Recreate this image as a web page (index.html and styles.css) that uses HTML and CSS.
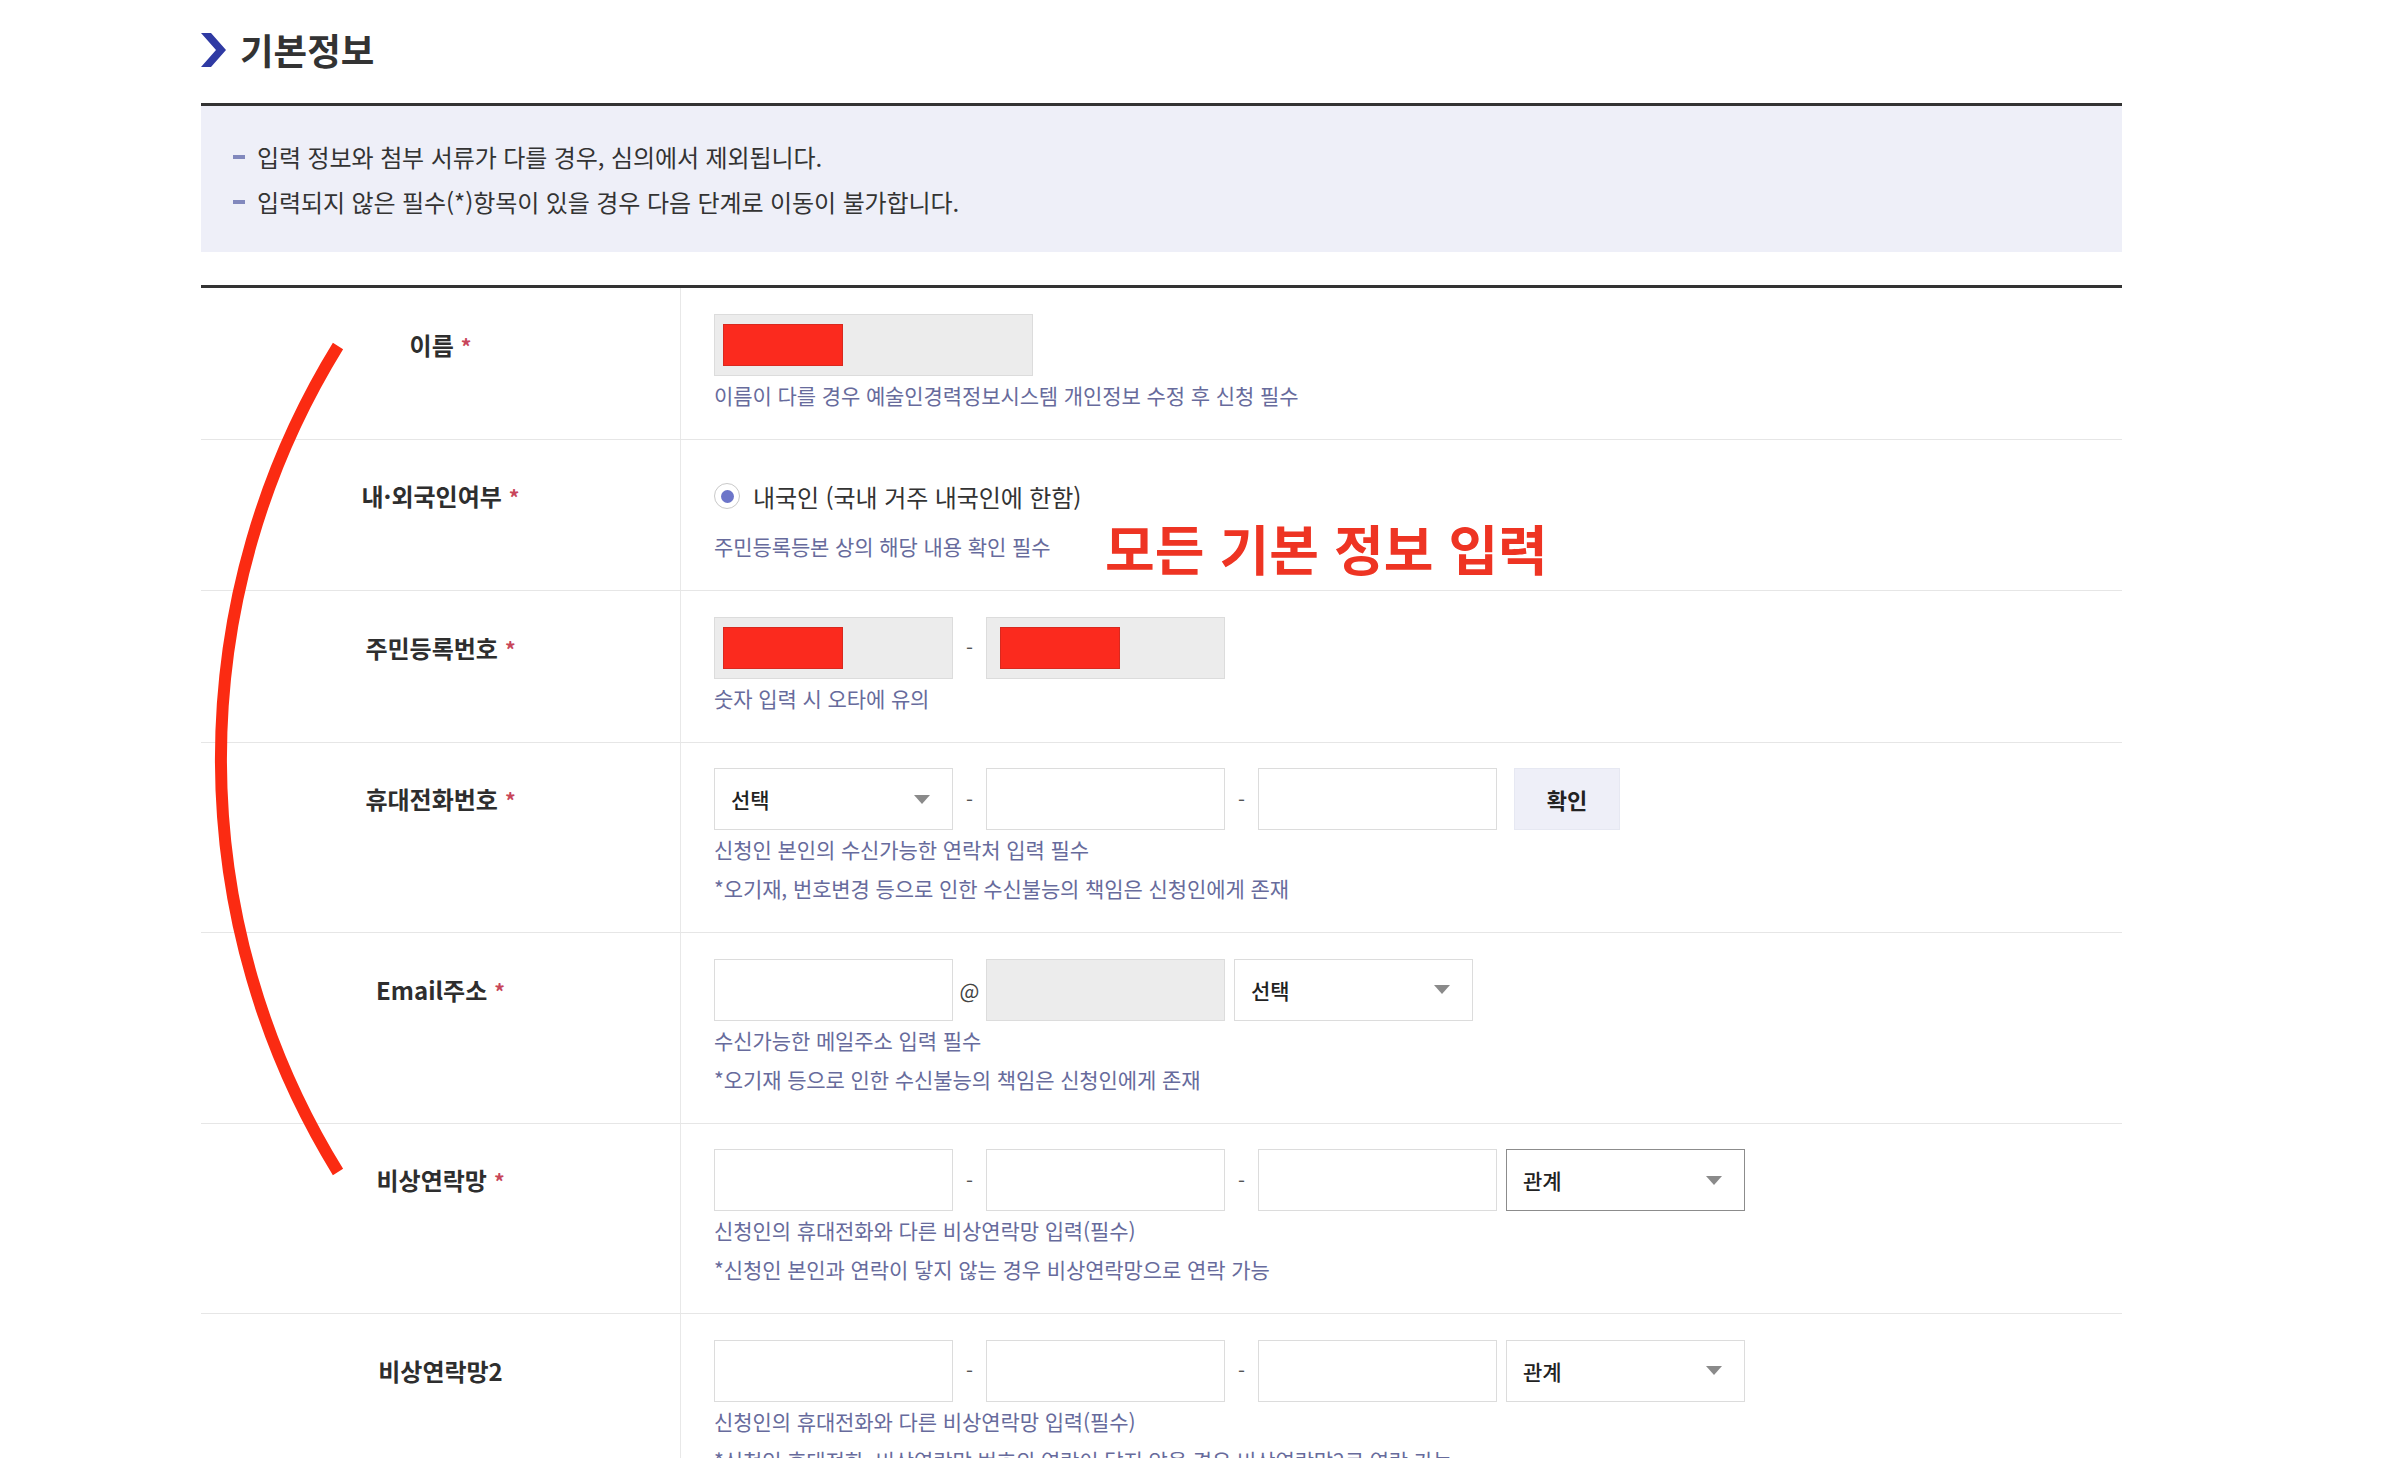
FILE: index.html
```html
<!DOCTYPE html>
<html lang="ko">
<head>
<meta charset="utf-8">
<title>기본정보</title>
<link rel="stylesheet" href="styles.css">
</head>
<body>
<div class="page">
  <div class="wrap">
    <h2 class="title">
      <svg class="chev" width="26" height="36" viewBox="0 0 26 36"><polygon points="0,1 10,1 25,18 10,35 0,35 15,18" fill="#2f3aa3"/></svg>
      <span>기본정보</span>
    </h2>

    <ul class="notice">
      <li><i class="bar"></i>입력 정보와 첨부 서류가 다를 경우, 심의에서 제외됩니다.</li>
      <li><i class="bar"></i>입력되지 않은 필수(*)항목이 있을 경우 다음 단계로 이동이 불가합니다.</li>
    </ul>

    <div class="form">
      <div class="row">
        <div class="label">이름<span class="req">*</span></div>
        <div class="field">
          <div class="controls">
            <div class="box dis wide"><span class="redact"></span></div>
          </div>
          <p class="help">이름이 다를 경우 예술인경력정보시스템 개인정보 수정 후 신청 필수</p>
        </div>
      </div>

      <div class="row">
        <div class="label">내·외국인여부<span class="req">*</span></div>
        <div class="field">
          <div class="controls">
            <span class="radio"><span class="dot"></span></span>
            <span class="radio-text">내국인 (국내 거주 내국인에 한함)</span>
          </div>
          <p class="help">주민등록등본 상의 해당 내용 확인 필수</p>
        </div>
      </div>

      <div class="row">
        <div class="label">주민등록번호<span class="req">*</span></div>
        <div class="field">
          <div class="controls">
            <div class="box dis"><span class="redact"></span></div>
            <span class="sep">-</span>
            <div class="box dis"><span class="redact r2"></span></div>
          </div>
          <p class="help">숫자 입력 시 오타에 유의</p>
        </div>
      </div>

      <div class="row">
        <div class="label">휴대전화번호<span class="req">*</span></div>
        <div class="field">
          <div class="controls">
            <div class="box select"><span>선택</span><i class="caret"></i></div>
            <span class="sep">-</span>
            <div class="box"></div>
            <span class="sep">-</span>
            <div class="box"></div>
            <button class="btn" type="button">확인</button>
          </div>
          <p class="help">신청인 본인의 수신가능한 연락처 입력 필수</p>
          <p class="help">*오기재, 번호변경 등으로 인한 수신불능의 책임은 신청인에게 존재</p>
        </div>
      </div>

      <div class="row">
        <div class="label">Email주소<span class="req">*</span></div>
        <div class="field">
          <div class="controls">
            <div class="box"></div>
            <span class="sep at">@</span>
            <div class="box dis"></div>
            <div class="box select gap"><span>선택</span><i class="caret"></i></div>
          </div>
          <p class="help">수신가능한 메일주소 입력 필수</p>
          <p class="help">*오기재 등으로 인한 수신불능의 책임은 신청인에게 존재</p>
        </div>
      </div>

      <div class="row">
        <div class="label">비상연락망<span class="req">*</span></div>
        <div class="field">
          <div class="controls">
            <div class="box"></div>
            <span class="sep">-</span>
            <div class="box"></div>
            <span class="sep">-</span>
            <div class="box"></div>
            <div class="box select gap focus"><span>관계</span><i class="caret"></i></div>
          </div>
          <p class="help">신청인의 휴대전화와 다른 비상연락망 입력(필수)</p>
          <p class="help">*신청인 본인과 연락이 닿지 않는 경우 비상연락망으로 연락 가능</p>
        </div>
      </div>

      <div class="row">
        <div class="label">비상연락망2</div>
        <div class="field">
          <div class="controls">
            <div class="box"></div>
            <span class="sep">-</span>
            <div class="box"></div>
            <span class="sep">-</span>
            <div class="box"></div>
            <div class="box select gap"><span>관계</span><i class="caret"></i></div>
          </div>
          <p class="help">신청인의 휴대전화와 다른 비상연락망 입력(필수)</p>
          <p class="help">*신청인 휴대전화, 비상연락망 번호의 연락이 닿지 않을 경우 비상연락망2로 연락 가능</p>
        </div>
      </div>
    </div>
  </div>

  <svg class="arc" width="400" height="1220" viewBox="0 0 400 1220">
    <path d="M 338 346 A 787 787 0 0 0 338 1172" fill="none" stroke="#fb2b12" stroke-width="12"/>
  </svg>
  <div class="memo">모든 기본 정보 입력</div>
</div>
</body>
</html>
```

FILE: styles.css
```css
html, body {
  margin: 0;
  padding: 0;
  background: #fff;
}

body {
  font-family: "Noto Sans CJK KR", "Noto Sans", sans-serif;
  color: #333;
}

.page {
  position: relative;
}

.wrap {
  margin-left: 201px;
  width: 1921px;
  padding-top: 30px;
}

.title {
  display: flex;
  align-items: center;
  gap: 13px;
  height: 40px;
  margin: 0 0 33px 0;
  font-size: 36.5px;
  font-weight: 700;
  letter-spacing: 0;
  color: #333;
  line-height: 40px;
}

.chev {
  display: block;
  flex: none;
}

.notice {
  list-style: none;
  margin: 0;
  padding: 28px 0 28px 32px;
  border-top: 3px solid #333;
  background: #eeeff8;
}

.notice li {
  display: flex;
  align-items: center;
  font-size: 24px;
  line-height: 45px;
  letter-spacing: -0.1px;
  color: #333;
}

.bar {
  display: inline-block;
  width: 12px;
  height: 4px;
  background: #8188bd;
  margin-right: 12px;
}

.form {
  margin-top: 33px;
  border-top: 3px solid #333;
}

.row {
  display: grid;
  grid-template-columns: 480px 1fr;
  border-bottom: 1px solid #e6e6e6;
}

.label {
  border-right: 1px solid #e8e8e8;
  padding-top: 25.5px;
  line-height: 62px;
  text-align: center;
  font-size: 24px;
  font-weight: 700;
  letter-spacing: 0;
  color: #2e2e2e;
}

.req {
  color: #c8465a;
  margin-left: 7px;
  font-size: 21px;
  font-weight: 700;
}

.field {
  padding: 25.5px 0 24px 33px;
}

.controls {
  display: flex;
  align-items: center;
  height: 62px;
}

.box {
  box-sizing: border-box;
  width: 239px;
  height: 62px;
  border: 1px solid #dcdcdc;
  background: #fff;
  display: flex;
  align-items: center;
  flex: none;
}

.box.wide {
  width: 319px;
}

.box.dis {
  background: #ececec;
}

.redact {
  display: block;
  width: 120px;
  height: 42px;
  margin-left: 8px;
  background: #fb2a1e;
  box-shadow: inset 0 0 0 1px #d8291f;
}

.redact.r2 {
  margin-left: 13px;
}

.sep {
  width: 33px;
  text-align: center;
  font-size: 20px;
  color: #555;
  flex: none;
}

.sep.at {
  color: #444;
  font-size: 21px;
}

.select {
  justify-content: space-between;
  padding: 0 22px 0 16px;
  font-size: 21px;
  font-weight: 500;
  color: #222;
}

.select.gap {
  margin-left: 9px;
}

.select.focus {
  border-color: #8c8c8c;
}

.caret {
  display: block;
  width: 0;
  height: 0;
  border-left: 8px solid transparent;
  border-right: 8px solid transparent;
  border-top: 9px solid #8a8a8a;
}

.btn {
  box-sizing: border-box;
  margin-left: 17px;
  width: 106px;
  height: 62px;
  border: 1px solid #e6e8f2;
  background: #eeeff8;
  font-family: "Noto Sans CJK KR", "Noto Sans", sans-serif;
  font-size: 22px;
  font-weight: 700;
  color: #222;
  padding: 0;
}

.radio {
  box-sizing: border-box;
  width: 26px;
  height: 26px;
  border: 1px solid #c9c9c9;
  border-radius: 50%;
  background: #fff;
  display: flex;
  align-items: center;
  justify-content: center;
  flex: none;
}

.dot {
  width: 13px;
  height: 13px;
  border-radius: 50%;
  background: #6c75c9;
}

.radio-text {
  margin-left: 13px;
  font-size: 24px;
  letter-spacing: -0.1px;
  color: #333;
}

.help {
  margin: 0;
  font-size: 21px;
  line-height: 39px;
  letter-spacing: -0.1px;
  color: #676b9c;
}

.arc {
  position: absolute;
  left: 0;
  top: 0;
  pointer-events: none;
}

.memo {
  position: absolute;
  left: 1105px;
  top: 518px;
  font-size: 54px;
  line-height: 60px;
  font-weight: 700;
  letter-spacing: 0;
  color: #ee3423;
  white-space: nowrap;
}
```
